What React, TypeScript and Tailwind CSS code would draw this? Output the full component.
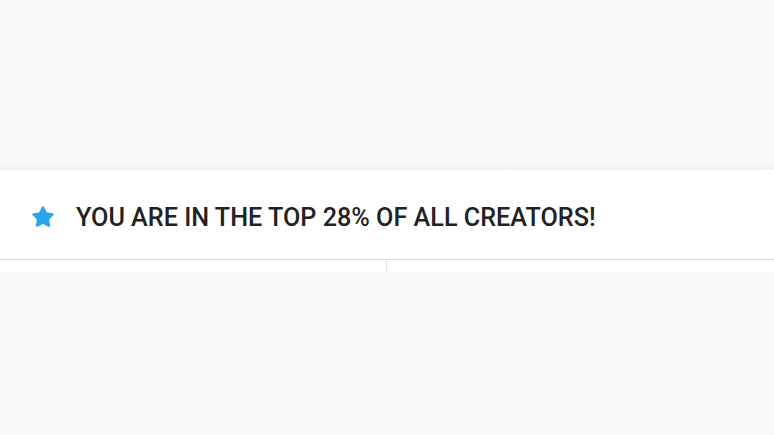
import { Star } from "lucide-react";

const App = () => {
    return (
        <div className="w-[774px] h-[435px] bg-[#f8f8f8] flex flex-col overflow-hidden" style={{ fontFamily: "Roboto, sans-serif" }}>
            <div className="h-[164px] shrink-0" />
            <div className="h-[6px] bg-gradient-to-b from-[#f8f8f8] to-[#f0f0f0]" />
            <div className="h-[90px] bg-white border-b border-[#dcdcdc] flex items-center pl-[31px] gap-[21px] pt-[4px]">
                <Star className="w-6 h-6 text-[#29a6e9]" fill="#29a6e9" strokeWidth={1.5} />
                <h3 className="text-[25.2px] font-medium text-[#222] leading-none pt-[2px]">
                    YOU ARE IN THE TOP 28% OF ALL CREATORS!
                </h3>
            </div>
            <div className="flex h-[12px]">
                <div className="w-[387px] border-r border-[#e2e2e2] bg-white" />
                <div className="flex-1 bg-white" />
            </div>
            <div className="flex-1" />
        </div>
    )
}

export default App
